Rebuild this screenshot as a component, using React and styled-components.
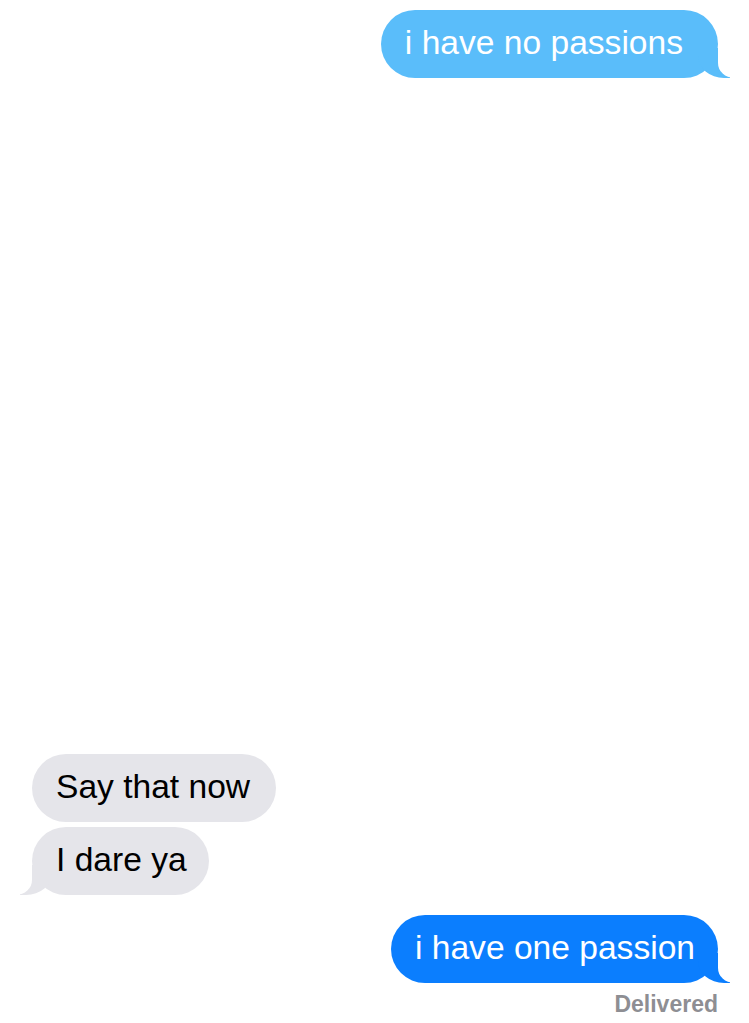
import React from "react";
import styled, { createGlobalStyle, css } from "styled-components";

const GlobalStyle = createGlobalStyle`
  html, body {
    margin: 0;
    padding: 0;
    background: #fff;
  }
  body {
    font-family: "Liberation Sans", Arial, sans-serif;
  }
`;

const COLORS = {
  light: "#5abdfa",
  blue: "#0b7efe",
  grey: "#e5e5ea",
};

const Thread = styled.div`
  box-sizing: border-box;
  height: 1023px;
  padding: 10px 31px 6px 32px;
  display: flex;
  flex-direction: column;
  overflow: hidden;
`;

const Spacer = styled.div`
  flex: 1;
`;

const Group = styled.div`
  display: flex;
  flex-direction: column;
  align-items: ${(p) => (p.$mine ? "flex-end" : "flex-start")};
  gap: 5px;
  margin-bottom: ${(p) => p.$after || 0}px;
`;

const tailRight = (color) => css`
  &::before {
    content: "";
    position: absolute;
    bottom: 0;
    right: -12px;
    width: 32px;
    height: 30px;
    background: ${color};
    border-bottom-left-radius: 26px 22px;
  }
  &::after {
    content: "";
    position: absolute;
    bottom: 0;
    right: -40px;
    width: 40px;
    height: 32px;
    background: #fff;
    border-bottom-left-radius: 16px 15px;
  }
`;

const tailLeft = (color) => css`
  &::before {
    content: "";
    position: absolute;
    bottom: 0;
    left: -12px;
    width: 32px;
    height: 30px;
    background: ${color};
    border-bottom-right-radius: 26px 22px;
  }
  &::after {
    content: "";
    position: absolute;
    bottom: 0;
    left: -40px;
    width: 40px;
    height: 32px;
    background: #fff;
    border-bottom-right-radius: 16px 15px;
  }
`;

const Bubble = styled.div`
  position: relative;
  box-sizing: border-box;
  height: 68px;
  padding: 14px ${(p) => p.$padR || 24}px 17px 24px;
  border-radius: 34px;
  font-size: 33.6px;
  line-height: 37px;
  white-space: nowrap;
  background: ${(p) => COLORS[p.$tone]};
  color: ${(p) => (p.$tone === "grey" ? "#000" : "#fff")};
  ${(p) =>
    p.$tail &&
    (p.$tone === "grey" ? tailLeft(COLORS[p.$tone]) : tailRight(COLORS[p.$tone]))}
`;

const Text = styled.span`
  position: relative;
  z-index: 1;
`;

const Status = styled.div`
  align-self: flex-end;
  margin-top: 8px;
  font-size: 23px;
  line-height: 26px;
  font-weight: 700;
  color: #8e8e93;
`;

export default function App() {
  return (
    <>
      <GlobalStyle />
      <Thread>
        <Group $mine>
          <Bubble $tone="light" $tail $padR={35}>
            <Text>i have no passions</Text>
          </Bubble>
        </Group>

        <Spacer />

        <Group $after={20}>
          <Bubble $tone="grey" $padR={26}>
            <Text>Say that now</Text>
          </Bubble>
          <Bubble $tone="grey" $tail $padR={22}>
            <Text>I dare ya</Text>
          </Bubble>
        </Group>

        <Group $mine>
          <Bubble $tone="blue" $tail $padR={23}>
            <Text>i have one passion</Text>
          </Bubble>
        </Group>
        <Status>Delivered</Status>
      </Thread>
    </>
  );
}
